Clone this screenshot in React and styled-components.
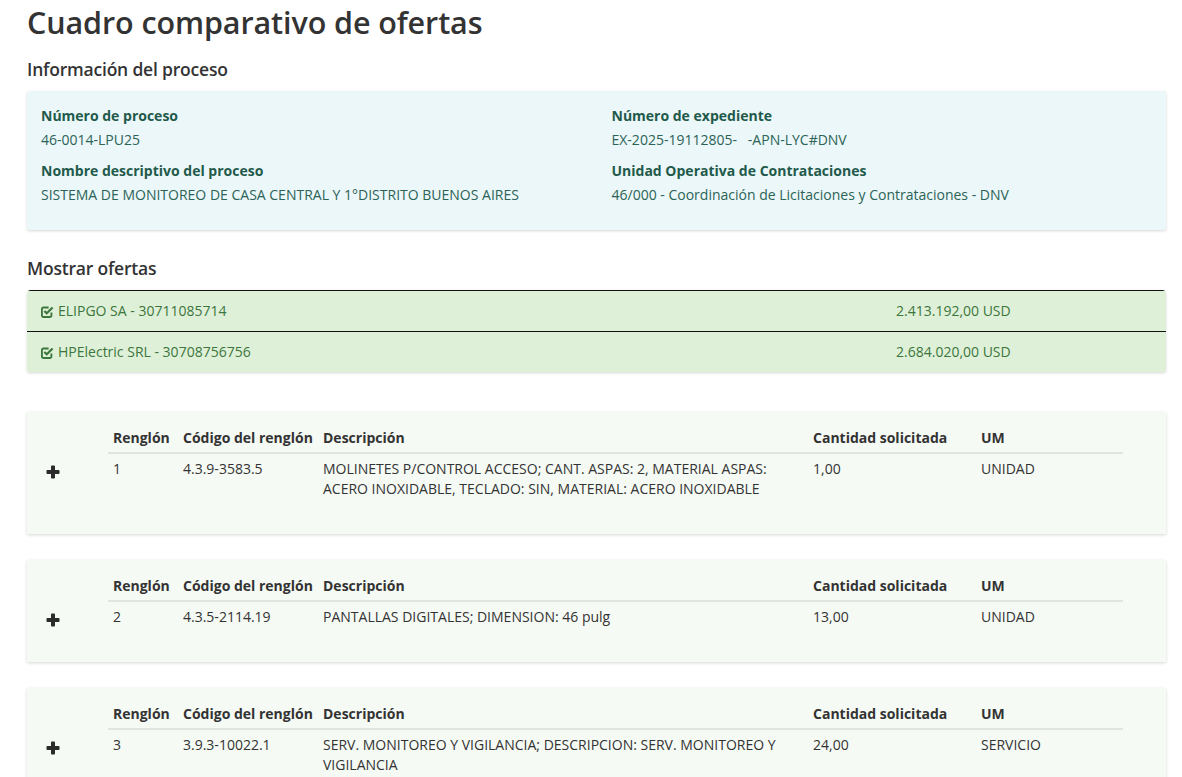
import styled, { createGlobalStyle } from "styled-components";

const GlobalStyle = createGlobalStyle`
  html, body {
    margin: 0;
    padding: 0;
    background: #ffffff;
  }
  body {
    font-family: "Open Sans", "Liberation Sans", sans-serif;
    font-size: 14px;
    line-height: 20px;
    color: #333333;
  }
`;

const process = {
  numero: "46-0014-LPU25",
  nombre: "SISTEMA DE MONITOREO DE CASA CENTRAL Y 1°DISTRITO BUENOS AIRES",
  expediente: "EX-2025-19112805-\u00a0\u00a0 -APN-LYC#DNV",
  unidad: "46/000 - Coordinación de Licitaciones y Contrataciones - DNV",
};

const offers = [
  { name: "ELIPGO SA - 30711085714", price: "2.413.192,00 USD" },
  { name: "HPElectric SRL - 30708756756", price: "2.684.020,00 USD" },
];

const items = [
  {
    renglon: "1",
    codigo: "4.3.9-3583.5",
    descripcion:
      "MOLINETES P/CONTROL ACCESO; CANT. ASPAS: 2, MATERIAL ASPAS: ACERO INOXIDABLE, TECLADO: SIN, MATERIAL: ACERO INOXIDABLE",
    cantidad: "1,00",
    um: "UNIDAD",
  },
  {
    renglon: "2",
    codigo: "4.3.5-2114.19",
    descripcion: "PANTALLAS DIGITALES; DIMENSION: 46 pulg",
    cantidad: "13,00",
    um: "UNIDAD",
  },
  {
    renglon: "3",
    codigo: "3.9.3-10022.1",
    descripcion:
      "SERV. MONITOREO Y VIGILANCIA; DESCRIPCION: SERV. MONITOREO Y VIGILANCIA",
    cantidad: "24,00",
    um: "SERVICIO",
  },
];

// outline box with a check mark, like the old "check-square-o" glyph
const CheckIcon = () => (
  <svg viewBox="0 0 14 14" fill="none" stroke="currentColor">
    <path
      d="M11.2 8.2v3.1a1.6 1.6 0 0 1-1.6 1.6H2.6A1.6 1.6 0 0 1 1 11.3V4.3a1.6 1.6 0 0 1 1.6-1.6h5.6"
      strokeWidth="2"
    />
    <path d="M3.6 6.4l2.6 2.6 6.3-6.3" strokeWidth="2.3" />
  </svg>
);

const PlusIcon = () => (
  <svg viewBox="0 0 14 14" fill="currentColor">
    <rect x="5" y="0.5" width="4" height="13" rx="0.8" />
    <rect x="0.5" y="5" width="13" height="4" rx="0.8" />
  </svg>
);

function App() {
  return (
    <Page>
      <GlobalStyle />
      <Title>Cuadro comparativo de ofertas</Title>

      <SectionTitle $top={17}>Información del proceso</SectionTitle>
      <InfoCard>
        <Field>
          <Label>Número de proceso</Label>
          <Value>{process.numero}</Value>
        </Field>
        <Field>
          <Label>Número de expediente</Label>
          <Value>{process.expediente}</Value>
        </Field>
        <Field>
          <Label>Nombre descriptivo del proceso</Label>
          <Value>{process.nombre}</Value>
        </Field>
        <Field>
          <Label>Unidad Operativa de Contrataciones</Label>
          <Value>{process.unidad}</Value>
        </Field>
      </InfoCard>

      <SectionTitle $top={26}>Mostrar ofertas</SectionTitle>
      <OfferList>
        {offers.map((o) => (
          <OfferRow key={o.name}>
            <OfferName>
              <CheckIcon />
              {o.name}
            </OfferName>
            <span>{o.price}</span>
          </OfferRow>
        ))}
      </OfferList>

      <Items>
        {items.map((it) => (
          <ItemCard key={it.renglon}>
            <Toggle>
              <PlusIcon />
            </Toggle>
            <Table>
              <colgroup>
                <col style={{ width: 70 }} />
                <col style={{ width: 140 }} />
                <col style={{ width: 490 }} />
                <col style={{ width: 168 }} />
                <col style={{ width: 147 }} />
              </colgroup>
              <thead>
                <tr>
                  <Th>Renglón</Th>
                  <Th>Código del renglón</Th>
                  <Th>Descripción</Th>
                  <Th>Cantidad solicitada</Th>
                  <Th>UM</Th>
                </tr>
              </thead>
              <tbody>
                <tr>
                  <Td>{it.renglon}</Td>
                  <Td>{it.codigo}</Td>
                  <Td>{it.descripcion}</Td>
                  <Td>{it.cantidad}</Td>
                  <Td>{it.um}</Td>
                </tr>
              </tbody>
            </Table>
          </ItemCard>
        ))}
      </Items>
    </Page>
  );
}

const Page = styled.div`
  padding: 4px 16px 40px 27px;
`;

const Title = styled.h1`
  margin: 0;
  font-family: "Open Sans", "Liberation Sans", sans-serif;
  font-size: 30.5px;
  line-height: 36px;
  font-weight: 600;
  color: #333333;
  letter-spacing: -0.1px;
`;

const SectionTitle = styled.h3`
  margin: ${(p) => p.$top}px 0 10px;
  font-size: 17.5px;
  line-height: 24px;
  font-weight: 600;
  color: #333333;
  letter-spacing: -0.2px;
`;

const InfoCard = styled.div`
  display: grid;
  grid-template-columns: 1fr 1fr;
  column-gap: 30px;
  padding: 15px 14px 14px;
  background: #ebf7f9;
  box-shadow: 0 1px 3px rgba(0, 0, 0, 0.16);
  border-radius: 2px;
`;

const Field = styled.div`
  margin-bottom: 11px;
`;

const Label = styled.div`
  font-weight: 700;
  color: #1f5a4b;
  margin-bottom: 4px;
`;

const Value = styled.div`
  color: #2c6357;
`;

const OfferList = styled.div`
  border-radius: 4px 4px 2px 2px;
  overflow: hidden;
  box-shadow: 0 1px 3px rgba(0, 0, 0, 0.16);
`;

const OfferRow = styled.div`
  display: grid;
  grid-template-columns: 1fr 256px;
  padding: 10px 14px;
  background: #dff0d8;
  color: #3c763d;
  border-top: 1px solid #111111;
`;

const OfferName = styled.span`
  display: flex;
  align-items: center;
  gap: 4px;

  svg {
    width: 13px;
    height: 13px;
    color: #3c763d;
  }
`;

const Items = styled.div`
  margin-top: 40px;
  display: flex;
  flex-direction: column;
  gap: 26px;
`;

const ItemCard = styled.div`
  display: flex;
  padding: 12px 43px 30px 0;
  background: #f6faf5;
  box-shadow: 0 1px 3px rgba(0, 0, 0, 0.16);
`;

const Toggle = styled.div`
  flex: 0 0 81px;
  padding: 40px 0 0 19px;
  box-sizing: border-box;

  svg {
    width: 14px;
    height: 14px;
    color: #2b2b2b;
  }
`;

const Table = styled.table`
  width: 1015px;
  table-layout: fixed;
  border-collapse: collapse;
  align-self: flex-start;
`;

const Th = styled.th`
  text-align: left;
  font-weight: 700;
  color: #333333;
  padding: 4px 5px 4px;
  border-bottom: 2px solid #dfe5df;
  white-space: nowrap;
`;

const Td = styled.td`
  vertical-align: top;
  padding: 5px 5px;
  color: #333333;
`;

export default App;
